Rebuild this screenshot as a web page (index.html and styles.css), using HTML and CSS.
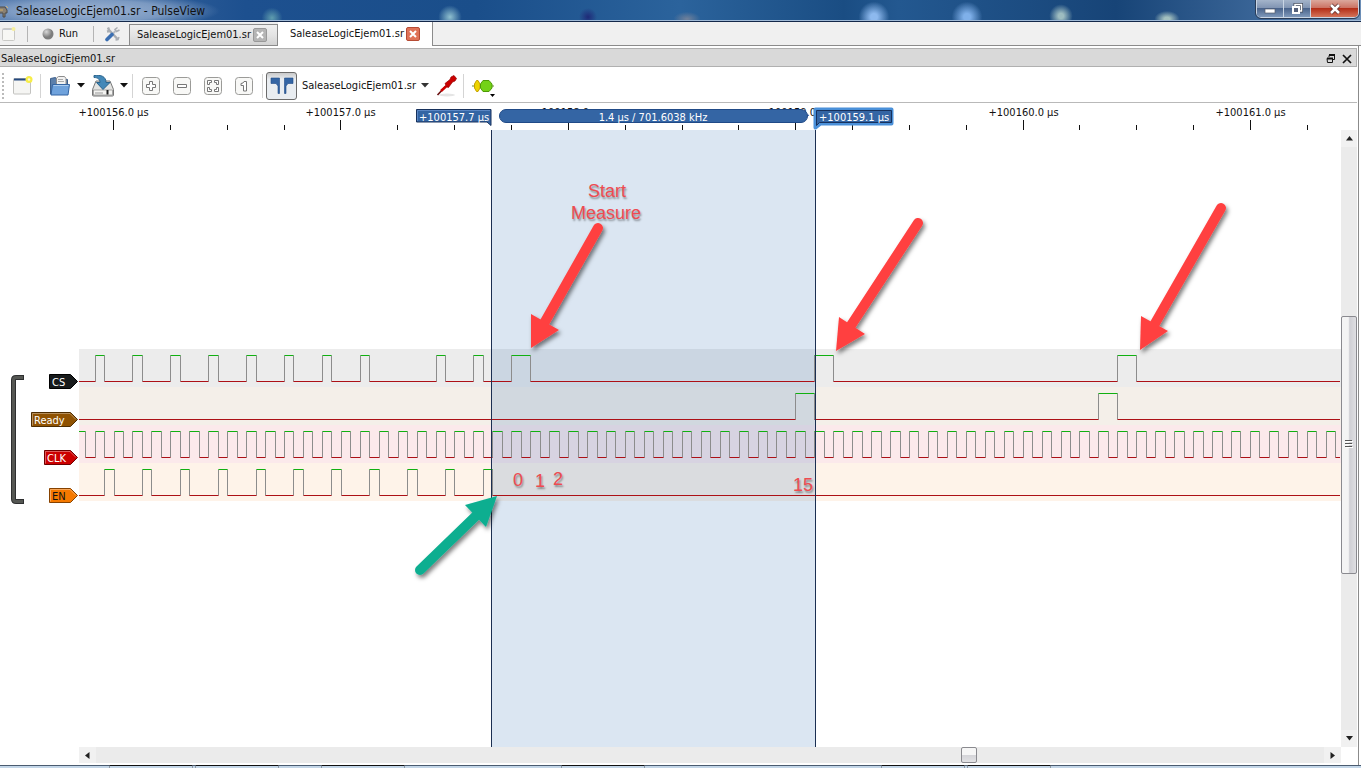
FILE: index.html
```html
<!DOCTYPE html>
<html lang="en">
<head>
<meta charset="utf-8">
<title>SaleaseLogicEjem01.sr - PulseView</title>
<link rel="stylesheet" href="styles.css">
</head>
<body>
<header class="titlebar">
  <svg class="app-icon" width="10" height="18" viewBox="0 0 10 18" aria-hidden="true"><path d="M0 5h5l2 3v3H5v4H3v-4H0" fill="#8a8173" stroke="#4d4a48"/><path d="M0 8h3M6 4l2 2" stroke="#d3b26a"/></svg>
  <h1 class="window-title">SaleaseLogicEjem01.sr - PulseView</h1>
  <div class="window-controls">
    <button class="win-btn" aria-label="Minimize"><svg width="12" height="12" viewBox="0 0 12 12"><rect x="1" y="6" width="10" height="4" fill="#fff" stroke="#555c6b" stroke-width=".7"/></svg></button>
    <button class="win-btn" aria-label="Restore"><svg width="12" height="12" viewBox="0 0 12 12"><path d="M4 3V1.500h6.500V8H9" fill="none" stroke="#444c5c" stroke-width="3"/><path d="M4 3V1.500h6.500V8H9" fill="none" stroke="#fff" stroke-width="1.500"/><rect x="2" y="4" width="6" height="6" fill="#56617a" stroke="#fff" stroke-width="2"/></svg></button>
    <button class="win-btn win-close" aria-label="Close"><svg width="12" height="12" viewBox="0 0 12 12"><path d="M2 2l8 8M10 2l-8 8" stroke="#5b3030" stroke-width="4"/><path d="M2 2l8 8M10 2l-8 8" stroke="#fff" stroke-width="2.500"/></svg></button>
  </div>
</header>

<nav class="session-bar">
  <button class="plain new-session" aria-label="New session"><svg width="16" height="16" viewBox="0 0 16 16"><rect x="2.500" y="2.500" width="12" height="12" rx="1" fill="#f7f7f4" stroke="#c9c9c6"/><path d="M3 3.500h9" stroke="#c3c7cf"/><circle cx="13.500" cy="3" r="2" fill="#f7ef9b"/></svg></button>
  <span class="bar-sep"></span>
  <button class="plain run"><svg width="12" height="12" viewBox="0 0 12 12" aria-hidden="true"><defs><radialGradient id="ball" cx=".35" cy=".3"><stop offset="0" stop-color="#d8d8d8"/><stop offset="1" stop-color="#7d7d7d"/></radialGradient></defs><circle cx="6" cy="6" r="5.500" fill="url(#ball)"/></svg>Run</button>
  <span class="bar-sep"></span>
  <button class="plain settings" aria-label="Settings"><svg width="16" height="16" viewBox="0 0 16 16"><path d="M3 1.500l1.500 3.500-2.500.5M4.500 4.500l8 8.500" fill="none" stroke="#a9adb2" stroke-width="2.400"/><path d="M12.500 1.500l-2.500 2 1.500 2 3-1.500M14 11l-1 2.500-2.500.5" fill="none" stroke="#a9adb2" stroke-width="1.500"/><path d="M10.500 5L7 8.500" stroke="#b8bcc2" stroke-width="2"/><path d="M7 8.500L2 13.500" stroke="#3b6fb2" stroke-width="3.600" stroke-linecap="round"/></svg></button>
  <div class="tabs">
    <div class="tab"><button class="plain">SaleaseLogicEjem01.sr</button><button class="tab-close" aria-label="Close tab"><svg width="8" height="8" viewBox="0 0 8 8"><path d="M1 1l6 6M7 1L1 7" stroke="#fff" stroke-width="2"/></svg></button></div>
    <div class="tab tab-active"><button class="plain">SaleaseLogicEjem01.sr</button><button class="tab-close" aria-label="Close tab"><svg width="8" height="8" viewBox="0 0 8 8"><path d="M1 1l6 6M7 1L1 7" stroke="#fff" stroke-width="2"/></svg></button></div>
  </div>
</nav>

<main class="session">
  <div class="dock-title">
    <h2>SaleaseLogicEjem01.sr</h2>
    <button class="plain" aria-label="Float"><svg width="10" height="10" viewBox="0 0 10 10"><path d="M3 3V1.500h5.500v4H7" fill="none" stroke="#111"/><path d="M3 1h6" stroke="#111" stroke-width="2"/><path d="M1 4.500h5.500v4h-5z" fill="none" stroke="#111"/><path d="M1 4.500h6" stroke="#111" stroke-width="2"/></svg></button>
    <button class="plain" aria-label="Close"><svg width="10" height="10" viewBox="0 0 10 10"><path d="M1 1l8 8M9 1L1 9" stroke="#111" stroke-width="1.700"/></svg></button>
  </div>

  <div class="toolbar" role="toolbar">
    <span class="grip"></span>
    <button class="plain tool-new" aria-label="New view"><svg width="22" height="22" viewBox="0 0 22 22"><rect x="1.500" y="3.500" width="17" height="15.500" rx="1" fill="#f5f5f3" stroke="#c2c2bf"/><path d="M2 4.500h15" stroke="#24497f" stroke-width="2"/><circle cx="17" cy="4.500" r="3.500" fill="#f7ed48"/><circle cx="17" cy="4.500" r="1.200" fill="#fffde0"/></svg></button>
    <span class="tool-sep"></span>
    <button class="plain tool-menu" aria-label="Open"><svg width="22" height="22" viewBox="0 0 22 22"><path d="M1.500 19V3.500l5-1 1 2h11V19z" fill="#5c7fab" stroke="#3c5f8c"/><path d="M7.500 11V3l2-1.500h6l1.500 2V11z" fill="#f1f1f1" stroke="#8c8c8c"/><path d="M9 4.500h5M9 6.500h6" stroke="#aaa"/><path d="M3.500 9.500h17L19 20H2z" fill="#6fa2dc" stroke="#3465a4"/><path d="M4.500 10.500h15" stroke="#a9cbef"/></svg><svg width="8" height="5" viewBox="0 0 8 5"><path d="M0 0h8L4 4.500z" fill="#111"/></svg></button>
    <button class="plain tool-menu tool-save" aria-label="Save"><svg width="22" height="22" viewBox="0 0 22 22"><path d="M4 6h14l3.500 8.500v5.500a1 1 0 0 1-1 1h-19a1 1 0 0 1-1-1v-5.500z" fill="#e4e4e2" stroke="#777"/><rect x="1.500" y="15" width="19" height="5" fill="#f4f4f2" stroke="#888" stroke-width=".7"/><path d="M4 17v2M6 17v2M8 17v2M10 17v2" stroke="#999"/><path d="M15.500 15v4.500" stroke="#222" stroke-width="2"/><path d="M2 .5c7-1 12 1 12 7h4l-7 7-6.500-7H8c0-3-2-5-6-5z" fill="#4388b8" stroke="#29638c"/></svg><svg width="8" height="5" viewBox="0 0 8 5"><path d="M0 0h8L4 4.500z" fill="#111"/></svg></button>
    <span class="tool-sep sep-zoom"></span>
    <div class="zoom-tools">
      <button class="plain" aria-label="Zoom in"><svg width="18" height="18" viewBox="0 0 18 18"><rect class="key" x=".5" y=".5" width="17" height="17" rx="3"/><path class="glyph" d="M7.500 4.500h3v3h3v3h-3v3h-3v-3h-3v-3h3z"/></svg></button>
      <button class="plain" aria-label="Zoom out"><svg width="18" height="18" viewBox="0 0 18 18"><rect class="key" x=".5" y=".5" width="17" height="17" rx="3"/><path class="glyph" d="M4.500 7.500h9v3h-9z"/></svg></button>
      <button class="plain" aria-label="Zoom to fit"><svg width="18" height="18" viewBox="0 0 18 18"><rect class="key" x=".5" y=".5" width="17" height="17" rx="3"/><path class="glyph" d="M3.500 3.500h4v2h-2v2h-2zM10.500 3.500h4v4h-2v-2h-2zM3.500 10.500h2v2h2v2h-4zM12.500 10.500h2v4h-4v-2h2z"/></svg></button>
      <button class="plain" aria-label="Zoom one to one"><svg width="18" height="18" viewBox="0 0 18 18"><rect class="key" x=".5" y=".5" width="17" height="17" rx="3"/><path class="glyph" d="M9 4.500h2.500v9.500h-3V8.500H6V6.500q2.500 0 3-2z"/></svg></button>
    </div>
    <span class="tool-sep sep-cursors"></span>
    <button class="cursor-toggle" aria-label="Show cursors" aria-pressed="true"><svg width="24" height="20" viewBox="0 0 24 20"><path d="M1 2h8.500v15.500H8V10L6 7.500H1zM23 2h-8.500v15.500H16V10l2-2.500h5z" fill="#3465a4" stroke="#204a87" stroke-width=".6"/></svg></button>
    <button class="plain device">SaleaseLogicEjem01.sr<svg width="8" height="5" viewBox="0 0 8 5" aria-hidden="true"><path d="M0 0h8L4 4.500z" fill="#333"/></svg></button>
    <button class="plain probe" aria-label="Configure channels"><svg width="22" height="22" viewBox="0 0 22 22"><ellipse cx="11" cy="20" rx="8" ry="1.500" fill="#e5e5e5"/><path d="M1.500 20L10 11" stroke="#6b1010" stroke-width="1.600"/><path d="M5 16l5.500-5" stroke="#c00" stroke-width="2.500"/><path d="M9 8.500l5-4 1-2.500 3-1.500 2.500 3-1.500 2.500-2.500 1-4 5.500-1.500-.5z" fill="#cc0000" stroke="#930000" stroke-width=".7"/></svg></button>
    <span class="tool-sep"></span>
    <button class="plain decoder" aria-label="Add protocol decoder"><svg width="23" height="22" viewBox="0 0 23 22"><path d="M0 11h22" stroke="#668b2c"/><path d="M4.500 5.500h1.500L8 9v4l-2 3.500H4.500L2.500 13V9z" fill="#edd400" stroke="#c4a000"/><path d="M11 5.500h6l3 3.500v4l-3 3.500h-6L8.500 13V9z" fill="#73d216" stroke="#4e9a06"/><path d="M18 19h5l-2.500 3z" fill="#000"/></svg></button>
  </div>

  <div class="view">
    <svg class="headers" width="79" height="100%">
      <path d="M24 274.500H16q-2.500 0-2.500 2.500v119q0 2.500 2.500 2.500h8" fill="none" stroke="#2e2f30" stroke-width="5"/>
      <path d="M23 274.500H16q-2.500 0-2.500 2.500v119q0 2.500 2.500 2.500h7" fill="none" stroke="#555753" stroke-width="3"/>
      <g class="tag">
        <path d="M49.500 271.500h21l7 7-7 7h-21z" fill="#171a1b" stroke="#000"/><text x="52" y="283">CS</text>
        <path d="M31.500 309.500h39l7 7-7 7h-39z" fill="#8f5202" stroke="#4d2d02"/><path class="tag-shine" d="M32.500 322.500v-12h37.500l6 6"/><text x="34" y="321">Ready</text>
        <path d="M44.500 347.500h26l7 7-7 7h-26z" fill="#cc0000" stroke="#6d0000"/><path class="tag-shine" d="M45.500 360.500v-12h24.500l6 6"/><text x="47" y="359">CLK</text>
        <path d="M49.500 385.500h21l7 7-7 7h-21z" fill="#f57900" stroke="#864200"/><path class="tag-shine" d="M50.500 398.500v-12h19.500l6 6"/><text class="tag-dark" x="52" y="397">EN</text>
      </g>
    </svg>
    <div class="plot">
      <svg class="ruler" width="100%" height="27">
        <g id="ticks"></g>
        <path d="M337.500 6.500h74.500v16l-4-3.500h-70.500z" fill="#3465a4" stroke="#17315c"/>
        <path class="shine" d="M338.500 18v-10.500h72.500"/>
        <text class="flag-text" x="340" y="18">+100157.7 µs</text>
        <rect x="420.500" y="6.500" width="308" height="13" rx="6.500" fill="#3465a4" stroke="#204a87"/>
        <text class="flag-text mid" x="574" y="18">1.4 µs / 701.6038 kHz</text>
        <path d="M736.500 6.500h76v14h-71l-5 4z" fill="#3465a4" stroke="#4a90d9" stroke-width="4" stroke-linejoin="round"/>
        <path d="M737.500 7.500h75v12h-72l-3 3z" fill="#3465a4" stroke="#17315c"/>
        <text class="flag-text" x="740" y="18">+100159.1 µs</text>
      </svg>
      <svg class="traces" width="100%" height="100%">
        <defs><filter id="shadow" x="-30%" y="-30%" width="160%" height="160%"><feDropShadow dx="2" dy="3" stdDeviation="2" flood-color="#000" flood-opacity=".5"/></filter></defs>
        <rect y="219" width="100%" height="38" fill="#ececec"/>
        <rect y="257" width="100%" height="38" fill="#f4efe9"/>
        <rect y="295" width="100%" height="38" fill="#fbe9eb"/>
        <rect y="333" width="100%" height="38" fill="#fef3e9"/>
        <rect class="span" x="412" width="324" height="100%"/>
        <g id="waves"></g>
        <path class="cursor-line" d="M412.500 0V2000M736.500 0V2000"/>
        <g filter="url(#shadow)">
          <g class="arrow-red">
            <path d="M519 98L463 197"/><path class="head" d="M452 218l0-34 28 16z"/>
            <path d="M839 93L769 200"/><path class="head" d="M757 221l3-34 26 17z"/>
            <path d="M1142 78L1074 197"/><path class="head" d="M1061 220l1-34 27 15z"/>
          </g>
          <g class="arrow-green"><path d="M341 440L403 380"/><path class="head" d="M418 366l-11 31-21-22z"/></g>
        </g>
        <g class="note">
          <text class="mid" x="528" y="67">Start</text>
          <text class="mid" x="527" y="89">Measure</text>
          <text x="434" y="356">0</text>
          <text x="456" y="357">1</text>
          <text x="474" y="355">2</text>
          <text x="714" y="361">15</text>
        </g>
      </svg>
      <div class="scroll scroll-x">
        <button class="plain" aria-label="Scroll left"><svg width="5" height="7" viewBox="0 0 5 7"><path d="M4.500 0v7L0 3.500z" fill="#222"/></svg></button>
        <div class="track"><span class="before"></span><span class="thumb"></span><span class="after"></span></div>
        <button class="plain" aria-label="Scroll right"><svg width="5" height="7" viewBox="0 0 5 7"><path d="M.5 0v7L5 3.500z" fill="#222"/></svg></button>
      </div>
    </div>
    <div class="scroll scroll-y">
      <button class="plain" aria-label="Scroll up"><svg width="7" height="5" viewBox="0 0 7 5"><path d="M0 4.500h7L3.500 0z" fill="#222"/></svg></button>
      <div class="track"><span class="before"></span><span class="thumb"><svg width="8" height="9" viewBox="0 0 8 9"><path d="M0 .5h7M0 3.500h7M0 6.500h7" stroke="#555"/><path d="M1 1.500h7M1 4.500h7M1 7.500h7" stroke="#fff"/></svg></span><span class="after"></span></div>
      <button class="plain" aria-label="Scroll down"><svg width="7" height="5" viewBox="0 0 7 5"><path d="M0 0h7L3.500 4.500z" fill="#222"/></svg></button>
    </div>
  </div>
</main>
<footer class="taskbar"><span></span><span></span><span class="gap"></span><span></span><span class="gap wide"></span><span></span><span class="gap far"></span><span></span><span></span></footer>
<script src="app.js"></script>
</body>
</html>
```
FILE: styles.css
```css
* { box-sizing: border-box; }

html, body { height: 100%; }

body {
  margin: 0;
  display: flex;
  flex-direction: column;
  overflow: hidden;
  background: #fff;
  color: #111;
  font: 11px/14px "DejaVu Sans Condensed", "DejaVu Sans", sans-serif;
}

h1, h2 { margin: 0; font: inherit; }
svg { display: block; flex: none; }

button {
  font: inherit;
  color: inherit;
  padding: 0;
  cursor: default;
}

.plain {
  border: 0;
  background: none;
  display: flex;
  align-items: center;
}

/* Title bar */
.titlebar {
  flex: none;
  height: 22px;
  display: flex;
  align-items: center;
  border-bottom: 1px solid #14284a;
  box-shadow: inset 0 -1px #9fb9d6;
  background:
    radial-gradient(ellipse 130px 18px at 90px 11px, #9db3d2 0%, #8ba6cad0 60%, transparent 100%),
    radial-gradient(circle 13px at 272px 18px, #5f9dae 0%, transparent 80%),
    radial-gradient(circle 13px at 450px 17px, #8fc0cf 0%, transparent 90%),
    radial-gradient(circle 10px at 588px 17px, #1f2a78 0%, transparent 90%),
    radial-gradient(ellipse 15px 8px at 687px 19px, #71819a 0%, transparent 90%),
    radial-gradient(circle 17px at 874px 17px, #8db9ee 20%, transparent 90%),
    radial-gradient(circle 17px at 967px 17px, #7fb0ea 20%, transparent 90%),
    radial-gradient(circle 13px at 1061px 16px, #9dbcc0 20%, transparent 90%),
    radial-gradient(ellipse 14px 9px at 1167px 19px, #a3c0bf 20%, transparent 90%),
    linear-gradient(90deg, #4c74a9 0, #1d508f 18%, #1a4e8a 35%, #2b639c 50%, #1a4d83 62%, #235890 66%, #174477 82%, #3c6799 93%, #6d8fb7 100%);
}

.window-title {
  flex: 1;
  margin-left: 6px;
  font-size: 12px;
}

.window-controls {
  display: flex;
  align-self: flex-start;
  height: 18px;
  margin-right: 2px;
  border: 1px solid #c9d5e4;
  border-top: 0;
  border-radius: 0 0 5px 5px;
  outline: 1px solid #2a3c57;
  overflow: hidden;
}

.win-btn {
  width: 27px;
  border: 0;
  border-right: 1px solid #c9d5e4;
  display: flex;
  justify-content: center;
  align-items: center;
  background: linear-gradient(#a4b4ca, #8195b3 45%, #4a648c 50%, #7e98ba);
}

.win-close {
  width: 47px;
  border-right: 0;
  background: linear-gradient(#dba89c, #cc7464 45%, #b42f18 50%, #d4745a);
}

/* Session tabs */
.session-bar {
  flex: none;
  height: 24px;
  display: flex;
  align-items: center;
  background: #f0f0f0;
  box-shadow: inset 0 -1px #8b8b8b;
}

.bar-sep {
  width: 1px;
  height: 16px;
  background: #b4b4b4;
}

.new-session { margin-right: 11px; }
.run { margin: 0 15px 0 14px; gap: 5px; }
.settings { margin: 0 8px 0 11px; }
.tabs { display: flex; align-self: stretch; align-items: flex-end; }

.tab {
  display: flex;
  align-items: center;
  gap: 2px;
  width: 149px;
  height: 22px;
  padding-left: 7px;
  border: 1px solid #8b8b8b;
  background: linear-gradient(#efefef, #e4e4e4 50%, #d2d2d2);
}

.tab-active {
  width: 155px;
  height: 24px;
  padding-left: 12px;
  border-width: 0 1px 0 0;
  background: #fff;
}

.tab-close {
  width: 14px;
  height: 14px;
  display: flex;
  justify-content: center;
  align-items: center;
  border: 1px solid #999;
  border-radius: 2px;
  background: #b5b5b5;
}

.tab-active .tab-close { border-color: #b64b34; background: #df7257; }

/* Session panel */
.session {
  flex: 1;
  min-height: 0;
  display: flex;
  flex-direction: column;
  margin-right: 2px;
  padding: 2px 1px 2px 0;
  border-right: 1px solid #8b8b8b;
}

.dock-title {
  flex: none;
  height: 19px;
  display: flex;
  align-items: center;
  gap: 6px;
  padding: 2px 4px 0 1px;
  border: solid #b0b0b0;
  border-width: 1px 1px 1px 0;
  background: #d9d9d9;
}

.dock-title h2 { flex: 1; }

.toolbar {
  flex: none;
  height: 36px;
  display: flex;
  align-items: center;
  padding: 2px 0 0 2px;
  border-bottom: 1px solid #b9b9b9;
}

.grip {
  width: 2px;
  height: 26px;
  background: repeating-linear-gradient(#bbb 0 2px, transparent 2px 4px);
}

.tool-sep {
  width: 1px;
  height: 24px;
  background: #d4d4d4;
}

.tool-new { margin: 0 6px 0 8px; }
.tool-menu { gap: 6px; margin-left: 8px; }
.tool-save { margin-left: 7px; }
.sep-zoom { margin: 0 9px 0 4px; }
.zoom-tools { display: flex; gap: 13px; }
.key { fill: #f8f8f6; stroke: #9b9b98; }
.glyph { fill: #fff; stroke: #777; }
.sep-cursors { margin: 0 3px 0 9px; }

.cursor-toggle {
  width: 31px;
  height: 28px;
  display: flex;
  justify-content: center;
  align-items: center;
  border: 1px solid #6b6b6b;
  border-radius: 3px;
  background: linear-gradient(#c9c9ca, #e9edf1 25%, #e9edf1);
}

.device { gap: 5px; margin: 0 7px 0 5px; }
.probe { margin-right: 5px; }
.decoder { margin-left: 8px; }

/* Waveform view */
.view { flex: 1; min-height: 0; display: flex; }

.plot {
  flex: 1;
  min-width: 0;
  display: flex;
  flex-direction: column;
}

.traces { flex: 1; min-height: 0; }
text { font-size: 11px; fill: #111; }
.mid { text-anchor: middle; }
.flag-text { fill: #fff; }
.shine { fill: none; stroke: #5b87c4; }
.tag text { fill: #fff; }
.tag .tag-dark { fill: #111; }
.tag-shine { fill: none; stroke: #fff; stroke-opacity: .35; }
.tick { stroke: #111; shape-rendering: crispEdges; }
.span { fill: #1e64b0; fill-opacity: .16; }
.cursor-line { stroke: #1b2f52; }
.edge { fill: none; stroke: #8c8c8c; }
.high { fill: none; stroke: #10b010; }
.low { fill: none; stroke: #ac1016; }

.arrow-red, .arrow-green { fill: none; stroke-width: 10; stroke-linecap: round; }
.arrow-red { stroke: #ff4141; }
.arrow-green { stroke: #0aae90; }
.arrow-red .head { fill: #ff4141; stroke: none; }
.arrow-green .head { fill: #0aae90; stroke: none; }

.note text {
  font: 18px "Liberation Sans", Arial, sans-serif;
  fill: #ee4b51;
  text-shadow: 1px 2px 2px #0006;
}

/* Scroll bars */
.scroll { flex: none; display: flex; background: #ebebeb; }
.scroll .plain { flex: none; justify-content: center; background: #f1f1f1; }
.track { flex: 1; display: flex; }

.thumb {
  flex: none;
  display: flex;
  align-items: center;
  justify-content: center;
  border: 1px solid #8a8a8f;
  border-radius: 2px;
}

.scroll-x { height: 16px; }
.scroll-x .plain { width: 17px; }
.scroll-x .before { flex: 865; }
.scroll-x .after { flex: 347; }
.scroll-x .thumb { width: 16px; background: linear-gradient(#f6f6f6 50%, #d4d4d8 50%, #e2e2e5); }

.scroll-y { width: 16px; flex-direction: column; margin: 27px 0 16px; }
.scroll-y .plain { height: 17px; }
.scroll-y .track { flex-direction: column; }
.scroll-y .before { flex: 170; }
.scroll-y .thumb { flex: 257; background: linear-gradient(90deg, #f4f4f4 45%, #cfcfd4 55%, #dfdfe2); }
.scroll-y .after { flex: 157; }

/* Strip of the desktop task bar */
.taskbar {
  flex: none;
  height: 3px;
  display: flex;
  padding-left: 109px;
  border-top: 1px solid #4b5c70;
  background: #c3d6e8;
}

.taskbar span {
  width: 84px;
  margin-top: -1px;
  margin-right: 2px;
  border: 1px solid #8b98a6;
  border-width: 0 1px;
  border-top: 1px solid #111;
}

.taskbar .gap { width: 38px; border: 0; }
.taskbar .wide { width: 152px; }
.taskbar .far { width: 232px; }
```
FILE: app.js
```js
const SVG = "http://www.w3.org/2000/svg";

function add(parent, name, attrs, text) {
  const node = document.createElementNS(SVG, name);
  for (const key in attrs) node.setAttribute(key, attrs[key]);
  if (text) node.textContent = text;
  parent.appendChild(node);
}

// Time ruler: one label per microsecond, four divisions each.
const ticks = document.getElementById("ticks");
const MICROSECOND = 227.4;
for (let i = 0; i < 22; i++) {
  const x = Math.round(34 + i * MICROSECOND / 4) + 0.5;
  add(ticks, "path", { class: "tick", d: `M${x} ${i % 4 ? 22 : 17}V27` });
  if (i % 4 === 0) {
    add(ticks, "text", { class: "mid", x, y: 13 }, `+${100156 + i / 4}.0 µs`);
  }
}

// Logic traces: pulses are [start, end] in half clock periods.
const waves = document.getElementById("waves");
const HALF = 9.47;
const START = 15.6;
const END = 1261;

const every = (first, step, count) =>
  Array.from({ length: count }, (_, n) => [first + n * step, first + n * step + 1]);

const channels = [
  { top: 225, pulses: [...every(0, 4, 8), [36, 37], [40, 41], [44, 46], [76, 78], [108, 110]] },
  { top: 263, pulses: [[74, 76], [106, 108]] },
  { top: 301, pulses: every(-2, 2, 67) },
  { top: 339, pulses: every(1, 4, 11) },
];

for (const { top, pulses } of channels) {
  const hi = top + 0.5;
  const lo = top + 26.5;
  let x = 0;
  let high = "";
  let low = "";
  let edge = "";
  for (const [from, to] of pulses) {
    const a = Math.round(START + from * HALF) + 0.5;
    const b = Math.round(START + to * HALF) + 0.5;
    if (a > x) low += `M${x} ${lo}H${a}`;
    high += `M${Math.max(a, 0)} ${hi}H${b}`;
    edge += `M${a} ${hi}V${lo}M${b} ${hi}V${lo}`;
    x = b;
  }
  low += `M${x} ${lo}H${END}`;
  add(waves, "path", { class: "edge", d: edge });
  add(waves, "path", { class: "low", d: low });
  add(waves, "path", { class: "high", d: high });
}
```
